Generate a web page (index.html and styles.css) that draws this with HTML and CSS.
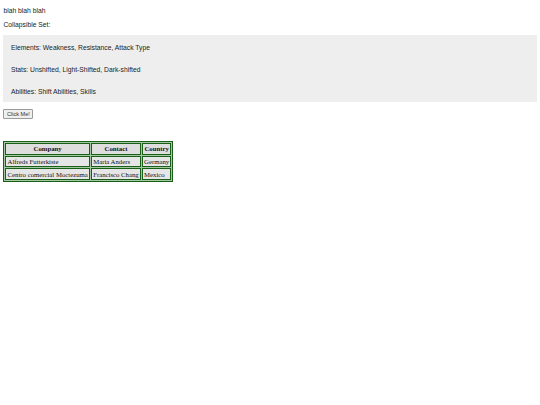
FILE: index.html
```html
<!DOCTYPE html>
<html>
<head>
<meta charset="utf-8">
<link rel="stylesheet" href="styles.css">
</head>
<body>
<p class="text first">blah blah blah</p>
<p class="text">Collapsible Set:</p>
<div class="collapsible">
  <div class="item">Elements: Weakness, Resistance, Attack Type</div>
  <div class="item">Stats: Unshifted, Light-Shifted, Dark-shifted</div>
  <div class="item">Abilities: Shift Abilities, Skills</div>
</div>
<div class="actions"><button class="btn">Click Me!</button></div>
<table class="grid">
  <tr><th>Company</th><th>Contact</th><th>Country</th></tr>
  <tr><td>Alfreds Futterkiste</td><td>Maria Anders</td><td>Germany</td></tr>
  <tr><td>Centro comercial Moctezuma</td><td>Francisco Chang</td><td>Mexico</td></tr>
</table>
</body>
</html>
```
FILE: styles.css
```css
body {
  margin: 3.4px;
  font-family: "Liberation Sans", Arial, sans-serif;
  font-size: 6.75px;
  color: #222;
}
.text {
  margin: 6.75px 0;
}
.text.first {
  margin-top: 3.75px;
}
.collapsible {
  background: #eee;
  padding-top: 2px;
}
.item {
  padding: 7.45px 7.6px;
}
.actions {
  margin: 7px 0 22.5px;
}
.btn {
  font-family: "Liberation Sans", Arial, sans-serif;
  font-size: 5.6px;
  color: #333;
  background: #efefef;
  border: 1px solid #9a9a9a;
  border-radius: 1px;
  padding: 0.5px 2.5px;
  line-height: 6.4px;
}
.grid {
  font-family: "Liberation Serif", "Times New Roman", serif;
  font-size: 6.75px;
  color: #111;
  border: 1px solid #1a5e1a;
  border-spacing: 1px;
  background: #a3c9a3;
}
.grid th,
.grid td {
  border: 1px solid #1a5e1a;
  padding: 1.3px 1.2px;
  background: #e6e6e6;
  text-align: left;
}
.grid th {
  background: #dedede;
  text-align: center;
}
```
